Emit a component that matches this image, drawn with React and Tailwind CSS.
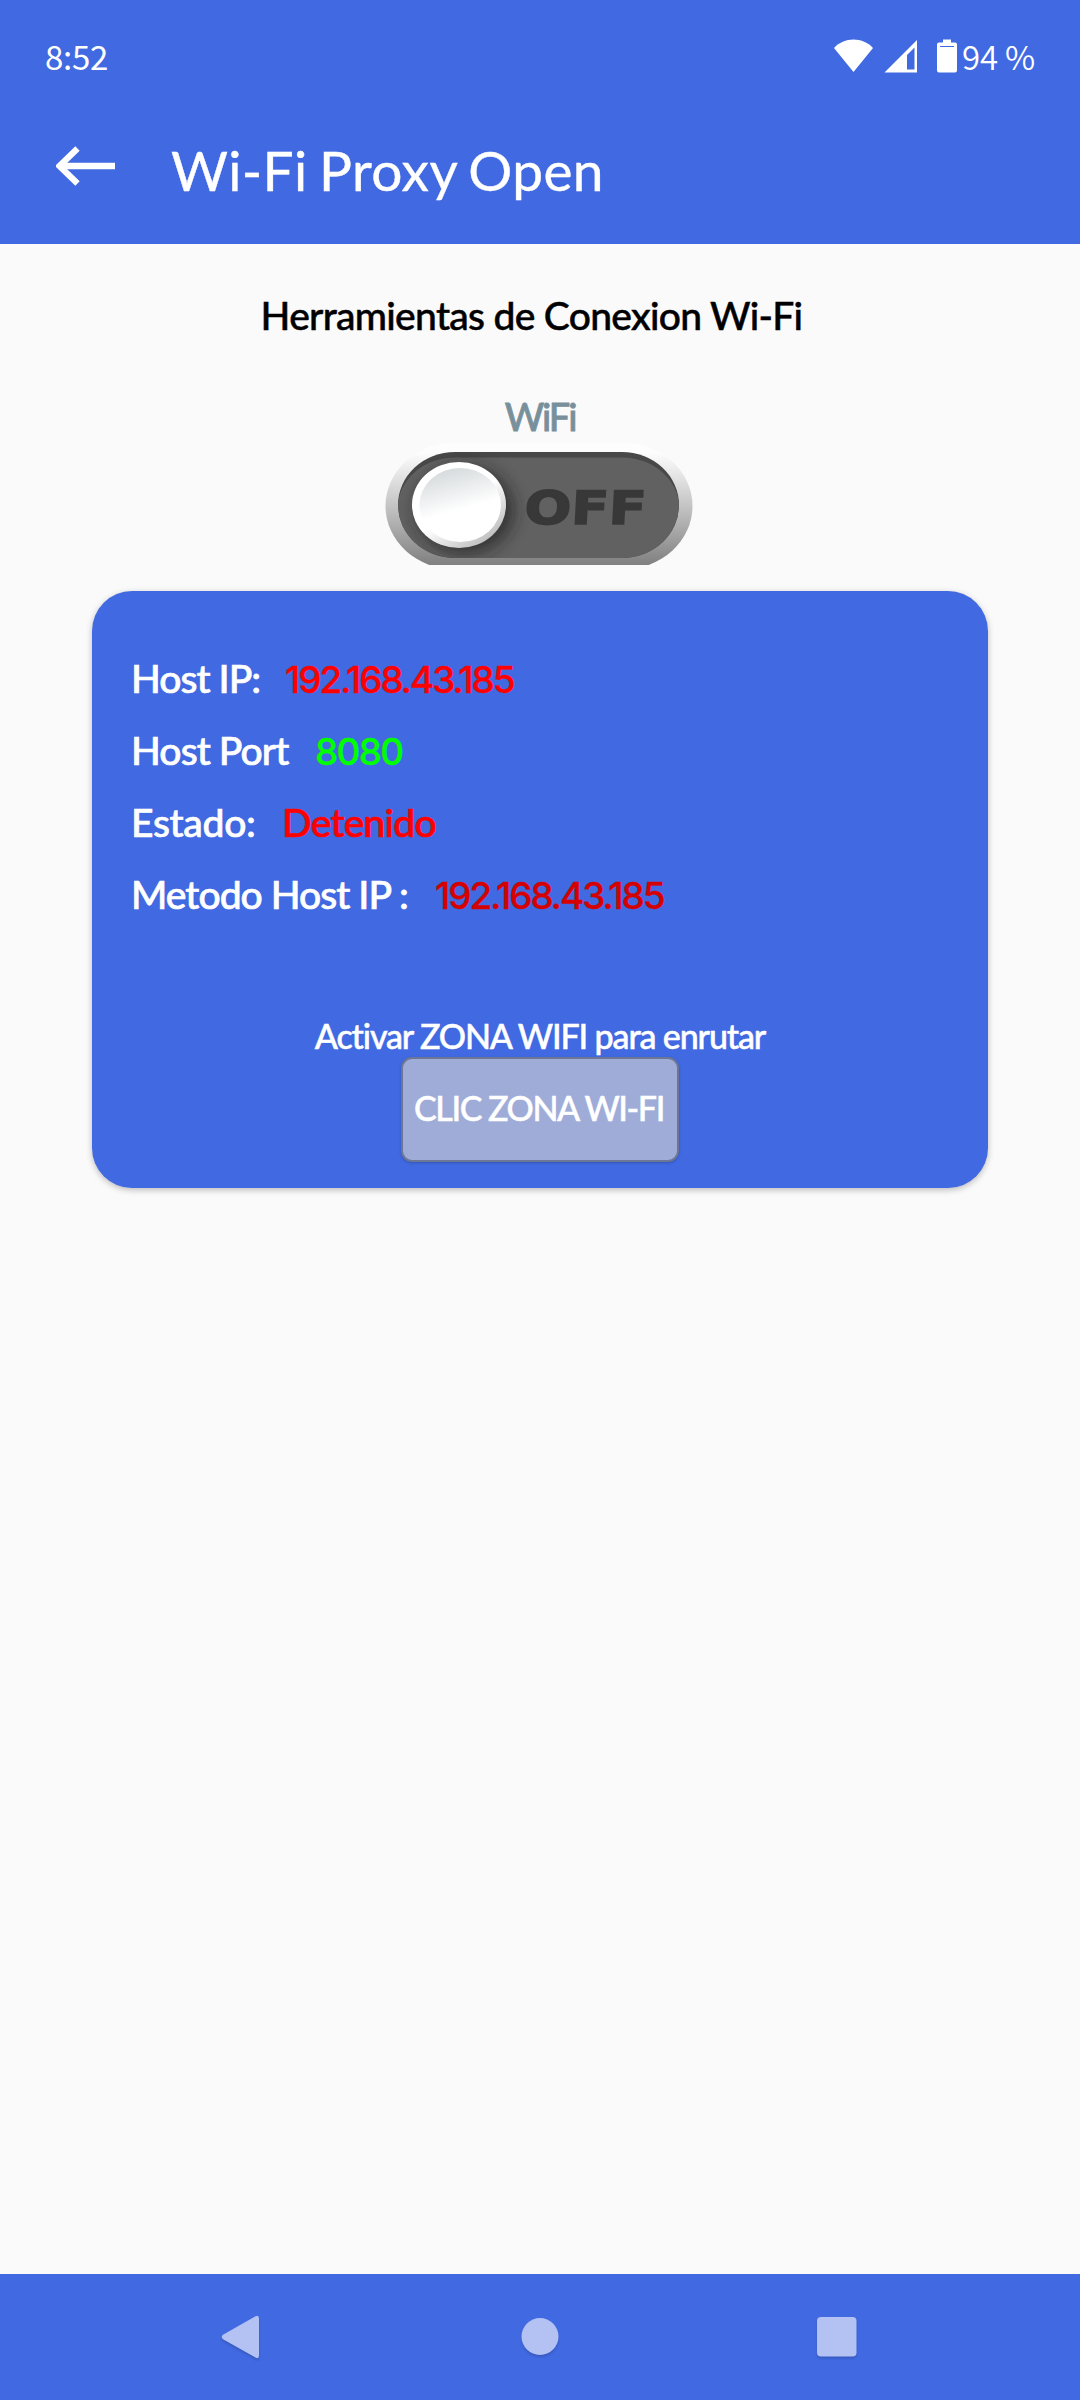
import React from "react";

const hostInfo = [
  {
    label: "Host IP:",
    value: "192.168.43.185",
    labelClass: "w-[154px] tracking-[-0.95px]",
    valueClass: "font-['Inter',sans-serif] text-[37px] tracking-[-2.1px] text-[#ff0000] [-webkit-text-stroke:0.3px]",
  },
  {
    label: "Host Port",
    value: "8080",
    labelClass: "w-[184px] tracking-[-0.9px]",
    valueClass: "font-['Inter',sans-serif] text-[37px] tracking-[-1.7px] text-[#00ff00] [-webkit-text-stroke:0.3px]",
  },
  {
    label: "Estado:",
    value: "Detenido",
    labelClass: "w-[151px] tracking-[-0.3px]",
    valueClass: "tracking-[-0.75px] text-[#ff0000] [-webkit-text-stroke:0.7px]",
  },
  {
    label: "Metodo Host IP :",
    value: "192.168.43.185",
    labelClass: "w-[304px] tracking-[-0.95px]",
    valueClass: "font-['Inter',sans-serif] text-[37px] tracking-[-2.1px] text-[#d50000] [-webkit-text-stroke:0.3px]",
  },
];

const StatusBar = () => (
  <div className="flex h-[112px] items-center justify-between pl-[45px] pr-[45px] font-['Noto_Sans_CJK_SC',sans-serif] text-[33px] leading-[48px]">
    <span className="tracking-[-0.3px]">8:52</span>
    <div className="flex items-center">
      <svg width="128" height="36" viewBox="0 0 128 36" fill="currentColor">
        <path d="M0 10C5 4.500 12 1.500 19.500 1.500S34 4.500 39 10L19.500 34z" />
        <path fillRule="evenodd" d="M50.500 34.500L83 2V34.500zM73 31.500h7.500V9.500L73 17z" />
        <path d="M109 1.500h8v3h4a2 2 0 0 1 2 2v26a2 2 0 0 1-2 2h-16a2 2 0 0 1-2-2V6.500a2 2 0 0 1 2-2h4z" />
        <path d="M106 8.500h14" stroke="#4169e1" strokeWidth="1" />
      </svg>
      <span className="font-[350] tracking-[-0.2px]">94 %</span>
    </div>
  </div>
);

const AppBar = () => (
  <div className="flex h-[132px] items-center pb-[25px] pl-[56px]">
    <svg width="60" height="40" viewBox="0 0 60 40" fill="none" stroke="currentColor">
      <path d="M3 20h56" strokeWidth="6.500" />
      <path d="M21.500 2.500L3.500 20l18 17.500" strokeWidth="6.200" />
    </svg>
    <h1 className="ml-[55px] mt-[9px] text-[55px] font-normal leading-[64px] tracking-[0.4px] [word-spacing:-3px] [-webkit-text-stroke:0.4px]">
      Wi-Fi Proxy Open
    </h1>
  </div>
);

const WifiSwitch = () => (
  <svg width="308" height="123" viewBox="0 0 308 123" className="block">
    <defs>
      <linearGradient id="rim" x1="0" y1="0" x2="0" y2="1">
        <stop offset="0.080" stopColor="#fdfdfd" />
        <stop offset="0.500" stopColor="#c4c4c4" />
        <stop offset="0.950" stopColor="#828282" />
      </linearGradient>
      <linearGradient id="knobRim" x1="0.200" y1="0.100" x2="0.850" y2="0.900">
        <stop offset="0.500" stopColor="#ffffff" />
        <stop offset="1" stopColor="#bdbdbd" />
      </linearGradient>
      <linearGradient id="knobFace" x1="0.250" y1="0" x2="0.450" y2="0.650">
        <stop offset="0" stopColor="#d3d8da" />
        <stop offset="0.900" stopColor="#ffffff" />
      </linearGradient>
      <filter id="knobShadow" x="-30%" y="-30%" width="170%" height="170%">
        <feGaussianBlur stdDeviation="8" />
      </filter>
      <clipPath id="track">
        <rect x="13" y="10" width="281" height="106" rx="57" ry="53" />
      </clipPath>
    </defs>
    <rect x="0.500" y="0.500" width="307" height="127" rx="70" ry="63.500" fill="url(#rim)" />
    <g clipPath="url(#track)">
      <rect x="13" y="10" width="281" height="106" fill="#484848" />
      <rect x="13" y="15.500" width="281" height="100.500" rx="57" ry="50" fill="#616161" />
      <ellipse cx="80" cy="68" rx="49" ry="44" fill="#1c1c1c" opacity="0.650" filter="url(#knobShadow)" />
    </g>
    <ellipse cx="74" cy="63" rx="47" ry="43" fill="url(#knobRim)" />
    <ellipse cx="75.200" cy="63" rx="40.700" ry="37" fill="url(#knobFace)" />
    <text
      x="139"
      y="82.500"
      textLength="122"
      lengthAdjust="spacingAndGlyphs"
      transform="translate(4 0) skewX(-3)"
      className="font-['DejaVu_Sans',sans-serif] text-[46px] font-bold"
      fill="#383838"
      stroke="#383838"
      strokeWidth="1.600"
    >
      OFF
    </text>
  </svg>
);

const NavBar = () => (
  <div className="flex h-[126px] items-center justify-center text-[#b3c2f3]">
    <svg width="640" height="50" viewBox="0 0 640 50" fill="currentColor" className="drop-shadow-[0_2px_1px_rgba(0,0,0,0.15)]">
      <path d="M3 22.800L35.500 4.200Q39 2.700 39 6.500V43.500Q39 47.300 35.500 45.600L3 27.200Q0.500 25 3 22.800z" />
      <circle cx="320" cy="24.500" r="18.500" />
      <rect x="597" y="5" width="39.500" height="39.500" rx="4" />
    </svg>
  </div>
);

export default function App() {
  return (
    <div className="flex h-[2400px] w-[1080px] flex-col bg-[#fafafa] font-['Lato',sans-serif]">
      <header className="h-[244px] bg-[#4169e1] text-white">
        <StatusBar />
        <AppBar />
      </header>

      <main className="flex flex-1 flex-col items-center pt-[47px] font-medium">
        <h2 className="pr-[17px] text-[39px] font-medium leading-[48px] tracking-[-0.7px] text-black [-webkit-text-stroke:0.5px]">
          Herramientas de Conexion Wi-Fi
        </h2>
        <p className="mt-[53px] text-[38px] leading-[48px] tracking-[-2.1px] text-[#78909c] [-webkit-text-stroke:0.8px]">
          WiFi
        </p>
        <div className="mt-[2px] pr-[2px]">
          <WifiSwitch />
        </div>

        <section className="mt-[26px] flex h-[597px] w-[896px] flex-col items-center rounded-[40px] bg-[#4169e1] pt-[51px] text-white shadow-[0_2px_6px_rgba(0,0,0,0.25)]">
          <div className="w-full pl-[39px] text-[39px]">
            {hostInfo.map(({ label, value, labelClass, valueClass }) => (
              <div key={label} className="flex h-[72px] items-baseline whitespace-nowrap leading-[72px]">
                <span className={`${labelClass} [-webkit-text-stroke:0.7px]`}>{label}</span>
                <span className={valueClass}>{value}</span>
              </div>
            ))}
          </div>
          <p className="mt-[86px] text-[34px] leading-[40px] tracking-[-1.13px] [-webkit-text-stroke:0.5px]">
            Activar ZONA WIFI para enrutar
          </p>
          <button
            type="button"
            className="mt-[1px] flex h-[105px] w-[278px] items-center justify-center whitespace-nowrap rounded-[11px] border-[2.5px] border-[#6c7795] bg-[#a0acd8] pb-[3px] pr-[2px] text-[34px] leading-[40px] tracking-[-1.42px] shadow-[0_1px_3px_rgba(0,0,0,0.2)] [-webkit-text-stroke:0.5px]"
          >
            CLIC ZONA WI-FI
          </button>
        </section>
      </main>

      <footer className="bg-[#4169e1]">
        <NavBar />
      </footer>
    </div>
  );
}
